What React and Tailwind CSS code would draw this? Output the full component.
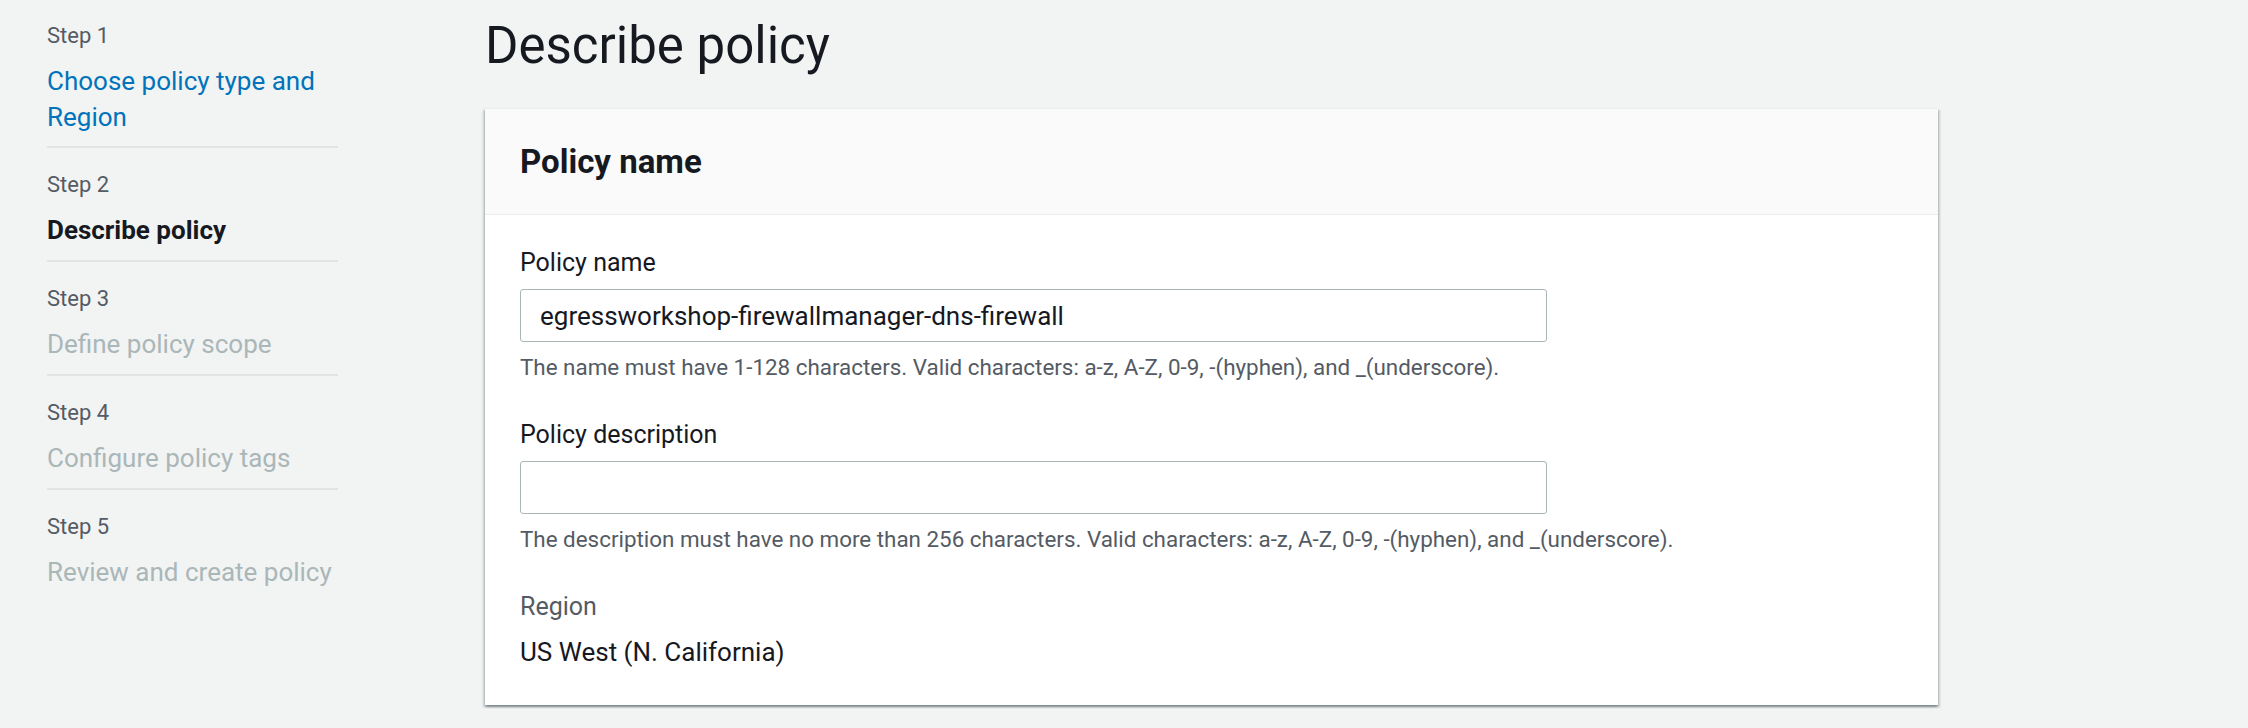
import React from "react";

const steps = [
  { label: "Step 1", title: "Choose policy type and Region", state: "done" },
  { label: "Step 2", title: "Describe policy", state: "current" },
  { label: "Step 3", title: "Define policy scope", state: "todo" },
  { label: "Step 4", title: "Configure policy tags", state: "todo" },
  { label: "Step 5", title: "Review and create policy", state: "todo" },
];

const titleColor = {
  done: "text-[#0073bb]",
  current: "text-[#16191f] font-bold",
  todo: "text-[#aab7b8]",
};

function StepNav() {
  return (
    <nav className="w-[338px] shrink-0 pl-[47px]">
      <ul>
        {steps.map((s, i) => (
          <li
            key={s.label}
            className={
              (i === 0 ? "pt-[21px] pb-[11px] " : "pt-[22px] pb-[12px] ") +
              (i < steps.length - 1 ? "border-b-2 border-[#e1e4e5]" : "")
            }
          >
            <div className="text-[22px] leading-[30px] text-[#545b64]">{s.label}</div>
            <div className={"mt-[12px] text-[26px] leading-[36px] " + titleColor[s.state]}>
              {s.title}
            </div>
          </li>
        ))}
      </ul>
    </nav>
  );
}

function Field({ label, value, hint }) {
  return (
    <div>
      <label className="block text-[25px] leading-[36px] text-[#16191f]">{label}</label>
      <input
        readOnly
        value={value}
        className="mt-[8px] block h-[53px] w-[1027px] rounded-[3px] border border-[#aab7b8] bg-white pl-[19px] text-[26px] text-[#16191f] outline-none"
      />
      <p className="mt-[10px] text-[22.4px] leading-[30px] text-[#545b64]">{hint}</p>
    </div>
  );
}

export default function App() {
  return (
    <div className="flex min-h-[728px] bg-[#f2f3f3] font-['Roboto',sans-serif] text-[#16191f]">
      <StepNav />

      <main className="ml-[147px] w-[1453px] shrink-0">
        <h1 className="pt-[16px] text-[51px] font-normal leading-[60px]">Describe policy</h1>

        <section className="mt-[32px] border-t border-[#eaeded] bg-white shadow-[0_2px_2px_0_rgba(0,28,36,0.3),2px_2px_2px_0_rgba(0,28,36,0.15),-2px_2px_2px_0_rgba(0,28,36,0.15)]">
          <div className="border-b border-[#eaeded] bg-[#fafafa] px-[35px] pt-[31px] pb-[30px]">
            <h2 className="text-[33px] font-bold leading-[44px]">Policy name</h2>
          </div>

          <div className="flex flex-col gap-[35px] px-[35px] pt-[30px] pb-[35px]">
            <Field
              label="Policy name"
              value="egressworkshop-firewallmanager-dns-firewall"
              hint="The name must have 1-128 characters. Valid characters: a-z, A-Z, 0-9, -(hyphen), and _(underscore)."
            />
            <Field
              label="Policy description"
              value=""
              hint="The description must have no more than 256 characters. Valid characters: a-z, A-Z, 0-9, -(hyphen), and _(underscore)."
            />
            <div>
              <div className="text-[25px] leading-[36px] text-[#545b64]">Region</div>
              <div className="mt-[9px] text-[26px] leading-[36px]">US West (N. California)</div>
            </div>
          </div>
        </section>
      </main>
    </div>
  );
}
